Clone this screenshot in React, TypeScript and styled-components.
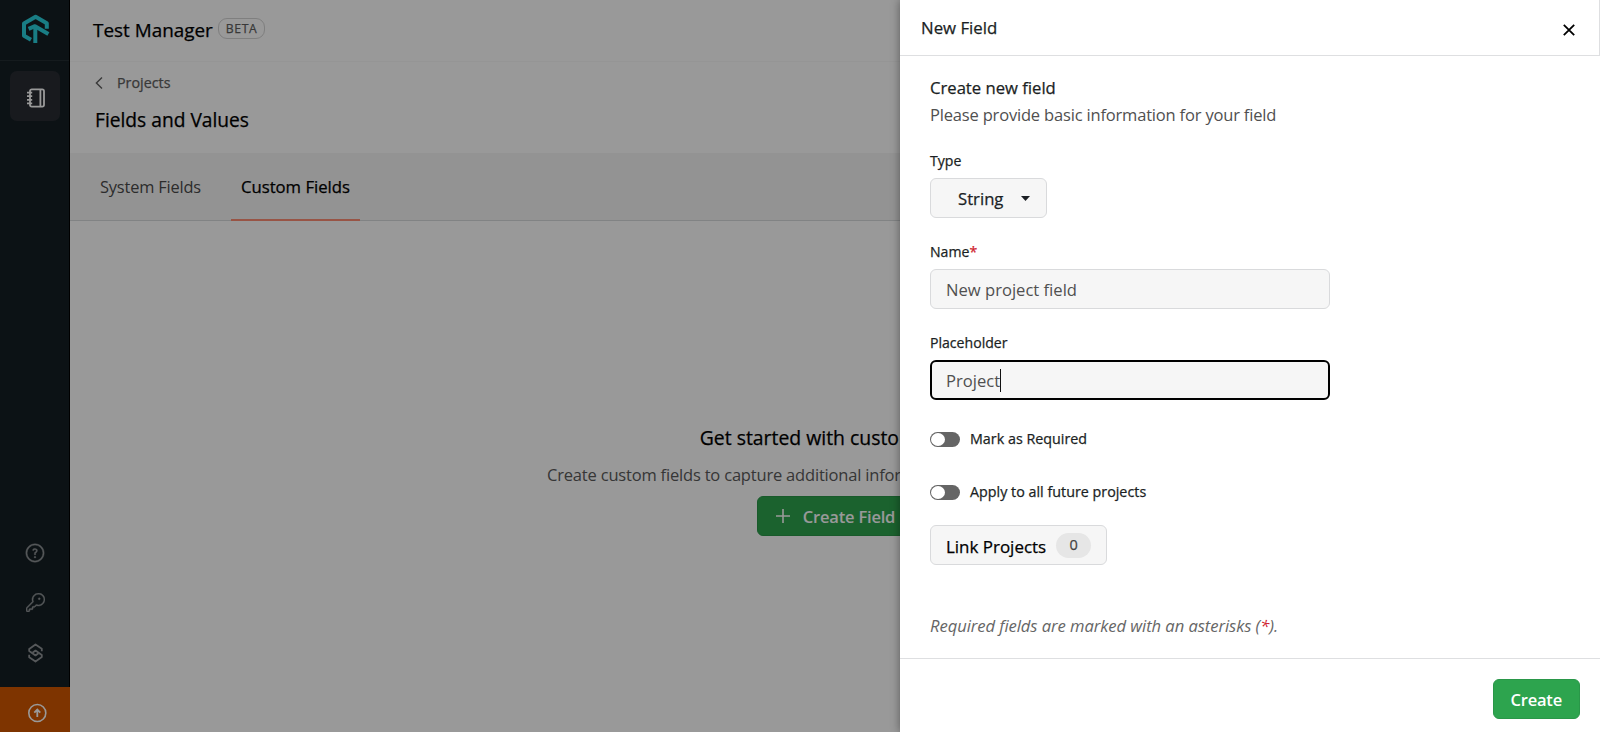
import React from 'react';
import styled, { createGlobalStyle, css } from 'styled-components';
import { GoKey, GoQuestion } from 'react-icons/go';

const GlobalStyle = createGlobalStyle`
  * { box-sizing: border-box; }
  body {
    margin: 0;
    font-family: "Open Sans", "Noto Sans", sans-serif;
    color: #1b1f24;
    background: #fff;
  }
  button, input { font-family: inherit; margin: 0; }
`;

const mediumWeight = css`
  font-weight: 400;
  -webkit-text-stroke: 0.25px currentColor;
`;

const Screen = styled.div`
  position: relative;
  display: flex;
  height: 732px;
  overflow: hidden;
`;

/* ---------- Sidebar ---------- */

const Sidebar = styled.nav`
  width: 70px;
  flex: none;
  display: flex;
  flex-direction: column;
  background: #151f24;
  border-right: 1px solid #000;
  color: #8f9396;
`;

const LogoCell = styled.div`
  height: 61px;
  display: flex;
  justify-content: center;
  padding: 12px 0 0 2px;
  border-bottom: 1px solid #232d33;
`;

const ActiveItem = styled.a`
  width: 50px;
  height: 50px;
  margin: 10px 0 0 10px;
  display: flex;
  align-items: center;
  justify-content: center;
  border-radius: 7px;
  background: #292c33;
  color: #fff;
  svg { margin: 3px 0 0 2px; }
`;

const BottomItems = styled.div`
  margin-top: auto;
  display: flex;
  flex-direction: column;
`;

const NavItem = styled.a`
  height: 50px;
  padding: 0 0 1px 1px;
  display: flex;
  align-items: center;
  justify-content: center;
  .octicon {
    stroke: currentColor;
    stroke-width: 0.5px;
  }
`;

const UpgradeItem = styled.a`
  height: 45px;
  margin-top: 9px;
  margin-right: -1px;
  display: flex;
  align-items: center;
  justify-content: center;
  padding: 6px 0 0 4px;
  background: #d25800;
  color: #fff;
`;

/* ---------- Main page ---------- */

const Main = styled.main`
  flex: 1;
  display: flex;
  flex-direction: column;
  background: #fff;
`;

const TopBar = styled.header`
  height: 62px;
  padding: 0 0 2px 23px;
  display: flex;
  align-items: center;
  gap: 5px;
  border-bottom: 1px solid #f8f8f8;
`;

const AppName = styled.h1`
  margin: 0;
  font-size: 18.9px;
  line-height: 28px;
  color: #000;
  ${mediumWeight}
`;

const BetaBadge = styled.span`
  height: 21px;
  margin-top: -3px;
  padding: 0 7px;
  border: 1px solid #d4d4d4;
  border-radius: 9px;
  font-size: 12.2px;
  line-height: 19px;
  letter-spacing: 0.6px;
  color: #606060;
  ${mediumWeight}
`;

const PageHead = styled.div`
  height: 91px;
  padding: 11px 0 0 25px;
`;

const BackLink = styled.a`
  display: flex;
  align-items: center;
  gap: 14px;
  font-size: 14.3px;
  line-height: 20px;
  color: #606060;
  ${mediumWeight}
`;

const PageTitle = styled.h2`
  margin: 13px 0 0;
  font-size: 19.2px;
  line-height: 28px;
  color: #000;
  ${mediumWeight}
`;

const TabBar = styled.div`
  height: 68px;
  padding-left: 20px;
  display: flex;
  gap: 20px;
  background: #f6f6f6;
  border-bottom: 1px solid #d8dadd;
`;

const Tab = styled.a<{ $active?: boolean }>`
  height: 68px;
  padding: 22px 10px 0;
  font-size: ${p => (p.$active ? '16.7px' : '16.4px')};
  line-height: 24px;
  letter-spacing: ${p => (p.$active ? '0' : '-0.18px')};
  color: ${p => (p.$active ? '#000' : '#4a4a4a')};
  border-bottom: 2px solid ${p => (p.$active ? '#fd8c73' : 'transparent')};
  ${p => p.$active && mediumWeight}
`;

const EmptyState = styled.section`
  flex: 1;
  display: flex;
  flex-direction: column;
  align-items: center;
  padding-top: 203px;
`;

const EmptyTitle = styled.h3`
  margin: 0;
  font-size: 19.4px;
  line-height: 28px;
  color: #000;
  ${mediumWeight}
`;

const EmptyText = styled.p`
  margin: 11px 0 9px;
  width: 576px;
  font-size: 16.5px;
  line-height: 24px;
  letter-spacing: -0.19px;
  white-space: nowrap;
  color: #5a5a5a;
`;

const PrimaryButton = styled.button`
  height: 40px;
  padding: 0 17px;
  display: flex;
  align-items: center;
  gap: 12px;
  border: 1px solid #2a9749;
  border-radius: 6px;
  background: #2da44e;
  color: #fff;
  font-size: 16.5px;
  font-weight: 600;
  line-height: 24px;
  letter-spacing: -0.2px;
`;

const ButtonLabel = styled.span`
  padding-top: 2px;
`;

/* ---------- Drawer ---------- */

const Backdrop = styled.div`
  position: absolute;
  inset: 0;
  background: rgba(0, 0, 0, 0.4);
`;

const Drawer = styled.aside`
  position: absolute;
  top: 0;
  right: 0;
  bottom: 0;
  width: 700px;
  display: flex;
  flex-direction: column;
  background: #fff;
  box-shadow: 0 0 9px rgba(0, 0, 0, 0.42);
`;

const DrawerHeader = styled.header`
  height: 56px;
  padding: 0 24px 0 21px;
  display: flex;
  align-items: center;
  justify-content: space-between;
  border-bottom: 1px solid #dedfe1;
  border-right: 1px solid #dedfe1;
`;

const DrawerTitle = styled.h2`
  margin: 0;
  font-size: 16.8px;
  line-height: 24px;
  ${mediumWeight}
`;

const CloseButton = styled.button`
  display: flex;
  padding: 4px 0 0;
  border: 0;
  background: none;
  color: #000;
`;

const DrawerBody = styled.form`
  flex: 1;
  display: flex;
  flex-direction: column;
  align-items: flex-start;
  padding: 20px 30px 0;
`;

const FormTitle = styled.h3`
  margin: 0 0 3px;
  font-size: 16.65px;
  line-height: 24px;
  ${mediumWeight}
`;

const FormIntro = styled.p`
  margin: 0 0 24px;
  font-size: 16.5px;
  line-height: 24px;
  letter-spacing: -0.18px;
  color: #505050;
`;

const Field = styled.div`
  display: flex;
  flex-direction: column;
  align-items: flex-start;
  gap: 7px;
  margin-bottom: 24px;
`;

const Label = styled.label`
  font-size: 14.1px;
  line-height: 20px;
  ${mediumWeight}
`;

const Asterisk = styled.span`
  color: #cf222e;
`;

const TypeSelect = styled.button`
  width: 117px;
  height: 40px;
  padding: 1px 16px 0 27px;
  display: flex;
  align-items: center;
  justify-content: space-between;
  border: 1px solid #d9dadc;
  border-radius: 6px;
  background: #f6f6f6;
  color: #1b1f24;
  font-size: 16.7px;
  line-height: 24px;
  ${mediumWeight}
`;

const TextInput = styled.div<{ $focused?: boolean }>`
  width: 400px;
  height: 40px;
  padding: 1px ${p => (p.$focused ? '14px' : '15px')} 0;
  display: flex;
  align-items: center;
  border: ${p => (p.$focused ? '2px solid #000' : '1px solid #d9dadc')};
  border-radius: 6px;
  background: #f6f6f6;
  color: #505050;
  font-size: 16.6px;
  line-height: 24px;
`;

const Caret = styled.span`
  width: 1px;
  height: 23px;
  background: #111;
`;

const Toggles = styled.div`
  display: flex;
  flex-direction: column;
  gap: 33px;
  margin: 5px 0 23px;
`;

const ToggleRow = styled.div`
  display: flex;
  align-items: center;
  gap: 10px;
  font-size: 14.3px;
  line-height: 20px;
  letter-spacing: 0.01px;
  ${mediumWeight}
`;

const Switch = styled.span`
  width: 30px;
  height: 15px;
  padding: 1px;
  border-radius: 8px;
  background: #656565;
  &::before {
    content: "";
    display: block;
    width: 14px;
    height: 13px;
    border-radius: 50%;
    background: #fff;
  }
`;

const LinkButton = styled.button`
  height: 40px;
  padding: 0 15px;
  display: flex;
  align-items: center;
  gap: 10px;
  border: 1px solid #d9dadc;
  border-radius: 6px;
  background: #f6f6f6;
  color: #000;
  font-size: 16.95px;
  ${mediumWeight}
`;

const Counter = styled.span`
  width: 35px;
  height: 25px;
  border-radius: 13px;
  background: #e6e6e6;
  color: #444;
  font-size: 14.5px;
  line-height: 24px;
  text-align: center;
`;

const Footnote = styled.p`
  margin: 49px 0 0;
  font-size: 16.6px;
  line-height: 24px;
  letter-spacing: -0.06px;
  font-style: italic;
  color: #666;
`;

const DrawerFooter = styled.footer`
  height: 74px;
  padding: 0 20px 13px;
  display: flex;
  align-items: flex-end;
  justify-content: flex-end;
  border-top: 1px solid #dedfe1;
`;

/* ---------- Icons ---------- */

const Logo = () => (
  <svg width="32" height="34" viewBox="20 12 32 34" fill="none" stroke="#2bd0dc" strokeWidth="4" strokeLinejoin="round">
    <path d="M31 39.8 24 35.8V23.4L35.6 16.7 46.8 23.2v5.6" />
    <path d="M28.6 28.9 35 26.2 48.4 34" />
    <path d="M35.3 27.5V43" />
  </svg>
);

const NotebookIcon = () => (
  <svg width="20" height="20" viewBox="0 0 20 20" fill="none" stroke="currentColor" strokeWidth="1.8">
    <rect x="4" y="1.4" width="14" height="17.2" rx="1.8" />
    <path d="M14.4 1.4v17.2M1 4.7h5.2M1 8.2h5.2M1 11.8h5.2M1 15.3h5.2" />
  </svg>
);

const LinkedIcon = () => (
  <svg width="17" height="20" viewBox="-.5 0 17 20" fill="none" stroke="currentColor" strokeWidth="1.8" strokeLinejoin="round">
    <path d="M14.3 8.2V5.7L8 1.4 1.7 5.9v2L8 12.4l3-2.1" />
    <path d="M1.7 11.8v2.5L8 18.6l6.3-4.5v-2L8 7.6 5 9.7" />
  </svg>
);

const UpgradeIcon = () => (
  <svg width="20" height="20" viewBox="0 0 20 20" fill="none" stroke="currentColor" strokeWidth="1.6">
    <circle cx="10.3" cy="10" r="8.5" />
    <path d="M10.3 14V7M7.3 9.6l3-3 3 3" strokeWidth="1.8" />
  </svg>
);

const BackIcon = () => (
  <svg width="8" height="12" viewBox="0 0 8 12" fill="none" stroke="currentColor" strokeWidth="1.4">
    <path d="M7 .6 1.4 6 7 11.4" />
  </svg>
);

const PlusIcon = () => (
  <svg width="16" height="16" viewBox="0 0 16 16" fill="none" stroke="currentColor" strokeWidth="1.6">
    <path d="M8 1v14M1 8h14" />
  </svg>
);

const CloseIcon = () => (
  <svg width="12" height="12" viewBox="0 0 12 12" fill="none" stroke="currentColor" strokeWidth="1.8">
    <path d="M.8.8 11.2 11.2M11.2.8.8 11.2" />
  </svg>
);

const DownIcon = () => (
  <svg width="9" height="5" viewBox="0 0 9 5" fill="currentColor">
    <path d="M0 0h9L4.5 5z" />
  </svg>
);

export default function App() {
  return (
    <>
      <GlobalStyle />
      <Screen>
        <Sidebar>
          <LogoCell><Logo /></LogoCell>
          <ActiveItem><NotebookIcon /></ActiveItem>
          <BottomItems>
            <NavItem><GoQuestion className="octicon" size={20} /></NavItem>
            <NavItem><GoKey className="octicon" size={19} /></NavItem>
            <NavItem><LinkedIcon /></NavItem>
            <UpgradeItem><UpgradeIcon /></UpgradeItem>
          </BottomItems>
        </Sidebar>

        <Main>
          <TopBar>
            <AppName>Test Manager</AppName>
            <BetaBadge>BETA</BetaBadge>
          </TopBar>
          <PageHead>
            <BackLink><BackIcon />Projects</BackLink>
            <PageTitle>Fields and Values</PageTitle>
          </PageHead>
          <TabBar>
            <Tab>System Fields</Tab>
            <Tab $active>Custom Fields</Tab>
          </TabBar>
          <EmptyState>
            <EmptyTitle>Get started with custom fields</EmptyTitle>
            <EmptyText>Create custom fields to capture additional information</EmptyText>
            <PrimaryButton><PlusIcon /><ButtonLabel>Create Field</ButtonLabel></PrimaryButton>
          </EmptyState>
        </Main>

        <Backdrop />

        <Drawer>
          <DrawerHeader>
            <DrawerTitle>New Field</DrawerTitle>
            <CloseButton aria-label="Close"><CloseIcon /></CloseButton>
          </DrawerHeader>
          <DrawerBody>
            <FormTitle>Create new field</FormTitle>
            <FormIntro>Please provide basic information for your field</FormIntro>
            <Field>
              <Label>Type</Label>
              <TypeSelect type="button">String<DownIcon /></TypeSelect>
            </Field>
            <Field>
              <Label>Name<Asterisk>*</Asterisk></Label>
              <TextInput>New project field</TextInput>
            </Field>
            <Field>
              <Label>Placeholder</Label>
              <TextInput $focused>Project<Caret /></TextInput>
            </Field>
            <Toggles>
              <ToggleRow><Switch />Mark as Required</ToggleRow>
              <ToggleRow><Switch />Apply to all future projects</ToggleRow>
            </Toggles>
            <LinkButton type="button">
              <ButtonLabel>Link Projects</ButtonLabel>
              <Counter>0</Counter>
            </LinkButton>
            <Footnote>Required fields are marked with an asterisks (<Asterisk>*</Asterisk>).</Footnote>
          </DrawerBody>
          <DrawerFooter>
            <PrimaryButton><ButtonLabel>Create</ButtonLabel></PrimaryButton>
          </DrawerFooter>
        </Drawer>
      </Screen>
    </>
  );
}
